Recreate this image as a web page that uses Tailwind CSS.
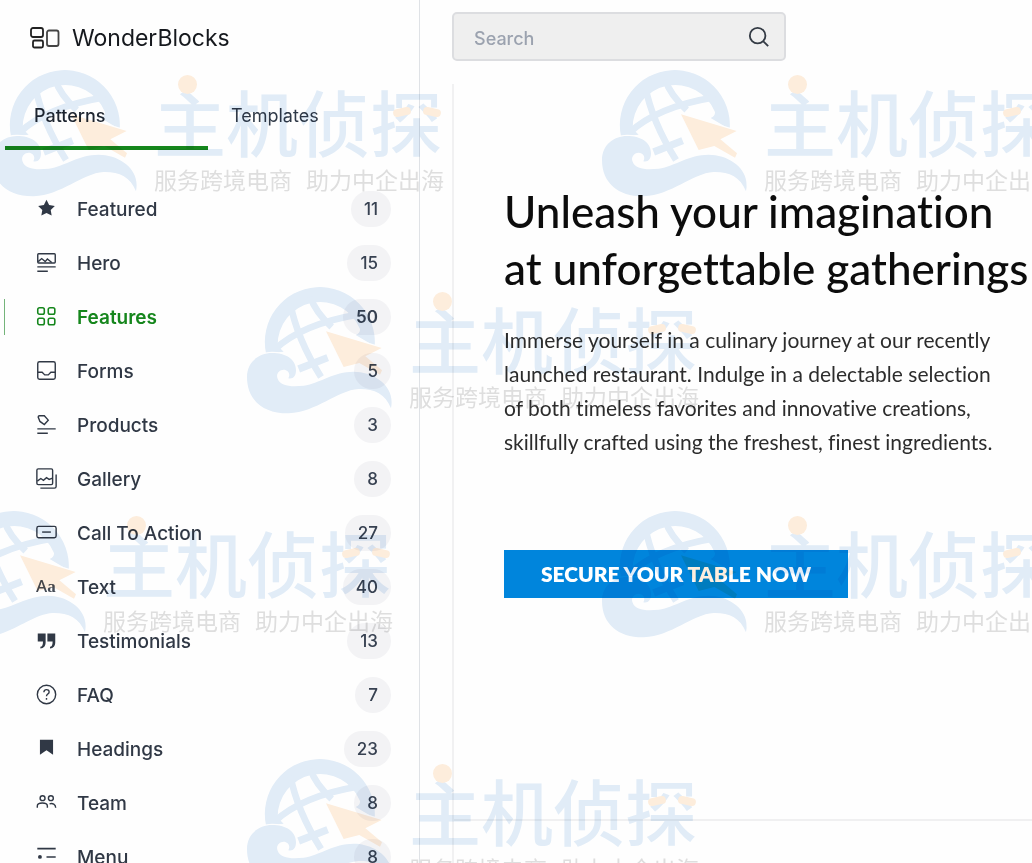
<!DOCTYPE html>
<html lang="en">
  <head>
    <meta charset="UTF-8" />
    <meta name="viewport" content="width=device-width, initial-scale=1.0" />
    <title>WonderBlocks</title>
    <script src="https://cdn.jsdelivr.net/npm/@tailwindcss/browser@4"></script>
  </head>
  <body class="relative h-screen overflow-hidden bg-[#fefefe] font-['Inter','Noto_Sans_CJK_SC',sans-serif] text-[#1e2530]">
    <div class="flex h-full">
      <!-- Sidebar -->
      <aside class="w-[420px] shrink-0 border-r border-[#dfe2e6]">
        <header class="flex h-[76px] items-center gap-3 pl-[30px]">
          <svg class="h-6 w-[30px]" viewBox="0 0 30 24" fill="none" stroke="#222" stroke-width="1.8">
            <rect x="1" y="2" width="12" height="9" rx="2" />
            <rect x="3" y="14.500" width="10" height="7" rx="1.500" />
            <rect x="17" y="4.500" width="11.500" height="15.500" rx="2" stroke="#444" />
          </svg>
          <h1 class="text-[23px] text-[#15181d]">WonderBlocks</h1>
        </header>

        <div class="mt-1 flex h-[70px] px-[5px] text-lg" role="tablist">
          <button role="tab" aria-selected="true" class="w-[203px] border-b-4 border-[#15861c] pt-1.5 pl-[29px] text-left font-medium">Patterns</button>
          <button role="tab" aria-selected="false" class="border-b-4 border-transparent pt-1.5 pl-[23px] text-left text-[#2f3947]">Templates</button>
        </div>

        <nav id="categories" class="mt-8"></nav>
      </aside>

      <!-- Preview -->
      <main class="flex min-w-0 flex-1 flex-col pl-8">
        <div class="mt-3 flex h-[49px] w-[334px] items-center rounded-[5px] border-2 border-[#dcdde0] bg-[#efefef] pr-[14px] pl-5">
          <input type="text" aria-label="Search" placeholder="Search" class="h-full min-w-0 flex-1 bg-transparent pt-1 text-lg font-medium outline-none placeholder:text-[#9ba2af]" />
          <button aria-label="Run search">
            <svg class="size-[22px]" viewBox="0 0 24 24" fill="none" stroke="#343b45" stroke-width="2">
              <circle cx="10.500" cy="10.500" r="8.500" />
              <path d="M16.500 16.500l5.500 5.500" />
            </svg>
          </button>
        </div>

        <div class="mt-[23px] flex-1 border-l-2 border-[#f1f1f2]">
          <section class="h-[737px] border-b-2 border-[#f0f0f1] pt-[99px] pl-[50px] font-['Lato','Noto_Sans_CJK_SC',sans-serif] [font-variant-ligatures:none]">
            <h2 class="text-[44px] leading-[57px] font-medium whitespace-nowrap text-[#0c0c0c]">
              Unleash your imagination<br />at unforgettable gatherings
            </h2>
            <p class="mt-[26px] text-[21px] leading-[34px] whitespace-nowrap text-[#2c2c2c]">
              Immerse yourself in a culinary journey at our recently<br />
              launched restaurant. Indulge in a delectable selection<br />
              of both timeless favorites and innovative creations,<br />
              skillfully crafted using the freshest, finest ingredients.
            </p>
            <button class="mt-[91px] h-12 w-[344px] bg-[#0085dc] text-[21px] font-extrabold text-white">SECURE YOUR TABLE NOW</button>
          </section>
        </div>
      </main>
    </div>

    <div id="watermarks" class="pointer-events-none absolute inset-0 overflow-hidden mix-blend-multiply"></div>

    <script>
      const line = 'fill="none" stroke="currentColor" stroke-width="1.6"';
      const icons = {
        star: '<path fill="currentColor" d="M12 2l3 6 6.500 1-4.700 4.600 1.100 6.400L12 17l-5.900 3 1.100-6.400L2.500 9 9 8z"/>',
        hero: `<g ${line}><rect x="2" y="2" width="20" height="10.500" rx="1"/><path d="M2.500 11l4-3.500 4 3.500 2.500-3 5 4M1.500 17h21M1.500 22h12"/></g>`,
        grid: `<g fill="none" stroke="currentColor" stroke-width="1.800"><rect x="2" y="2" width="7.500" height="7.500" rx="2"/><rect x="14" y="2" width="7.500" height="7.500" rx="2"/><rect x="2" y="14" width="7.500" height="7.500" rx="2"/><rect x="14" y="14" width="7.500" height="7.500" rx="2"/></g>`,
        inbox: `<g ${line}><rect x="2" y="2" width="20" height="20" rx="2"/><path d="M2 14h5l3 3h4l3-3h5"/></g>`,
        tag: `<g ${line}><path d="M2.500 3.500c0-1 .5-1.500 1.500-1.500h5.500l4.500 5-4.500 5-5-3.500zM1.500 17h21M1.500 22h12"/></g>`,
        gallery: `<g ${line}><rect x="1" y="1" width="18" height="18" rx="1.500"/><path d="M1.500 15l4-3 3 2 3.500-3 3 2 4-1.500M23 7.500V21a2 2 0 0 1-2 2H5"/></g>`,
        action: `<g ${line}><rect x="1" y="5" width="22" height="13" rx="2"/><path d="M7 11.500h10"/></g>`,
        quote: '<path fill="currentColor" d="M2 4h9v10c0 4-2 7-6 7v-2c2 0 3-2 3-6H2zM13 4h9v10c0 4-2 7-6 7v-2c2 0 3-2 3-6h-6z"/>',
        help: `<g ${line}><circle cx="12" cy="12" r="10.500"/><path d="M9 9.500c0-4 6-4 6-.5 0 2.500-3 2.500-3 5M12 16v2"/></g>`,
        bookmark: '<path fill="currentColor" d="M4.500 2h15v17L12 14l-7.500 5z"/>',
        team: `<g ${line}><circle cx="7.500" cy="7" r="2.800"/><circle cx="17" cy="7" r="2.800"/><path d="M1.500 18v-2c0-4.500 11.500-4.500 11.500 0v2M15.500 13.500c3.500-1 7 .5 7 4.500"/></g>`,
        menu: `<g fill="none" stroke="currentColor" stroke-width="1.800"><path d="M1.500 3h21M12 12.500h10.500M1.500 22h21"/></g><circle cx="4.500" cy="12.500" r="2.200" fill="currentColor"/>`,
      };

      const categories = [
        ["Featured", 11, "star"],
        ["Hero", 15, "hero"],
        ["Features", 50, "grid"],
        ["Forms", 5, "inbox"],
        ["Products", 3, "tag"],
        ["Gallery", 8, "gallery"],
        ["Call To Action", 27, "action"],
        ["Text", 40, null],
        ["Testimonials", 13, "quote"],
        ["FAQ", 7, "help"],
        ["Headings", 23, "bookmark"],
        ["Team", 8, "team"],
        ["Menu", 8, "menu"],
      ];

      document.getElementById("categories").innerHTML = categories
        .map(([name, count, icon]) => {
          const active = name === "Features";
          const glyph = icon
            ? `<svg class="size-[21px]" viewBox="0 0 24 24">${icons[icon]}</svg>`
            : `<span aria-hidden="true" class="font-['Noto_Sans',sans-serif] text-[17px] leading-5 text-[#454b55]">A<span class="font-['Liberation_Serif',serif] font-bold">a</span></span>`;
          return `
            <a href="#" class="relative flex h-[54px] items-center pr-7 pl-9 text-[19px] ${active ? "font-semibold text-[#15861c]" : "font-medium text-[#303845]"}">
              ${active ? '<span class="absolute left-1 h-9 w-px bg-[#74b47a]"></span>' : ""}
              <span class="flex w-[41px] items-center pb-0.5">${glyph}</span>
              <span class="flex-1 pt-0.5">${name}</span>
              <span class="flex h-9 items-center rounded-full bg-[#f3f3f5] px-[13px] pt-0.5 text-[17px] text-[#374151] ${active ? "font-semibold" : "font-medium"}">${count}</span>
            </a>`;
        })
        .join("");

      // Left and top of each watermark stamp
      const stamps = [[-8, 70], [602, 70], [247, 287], [-59, 511], [602, 511], [247, 759]];

      document.getElementById("watermarks").innerHTML = stamps
        .map(([x, y]) => `
          <div class="absolute flex gap-[17px]" style="left: ${x}px; top: ${y}px">
            <svg class="h-[127px] w-[145px] shrink-0" viewBox="0 0 435 381">
              <path fill="#e2edf8" d="M57 199A165 165 0 1 1 383 178L326 144Q340 138 339 126A128 128 0 0 0 92 176L110 194z"/>
              <g fill="none" stroke="#e2edf8" stroke-width="20">
                <path d="M130 50Q150 155 222 270M190 30Q205 75 254 120M80 190Q165 110 340 82"/>
                <path d="M155 246L242 212" stroke-width="22"/>
              </g>
              <path fill="#feeedd" stroke="#fff" stroke-width="8" paint-order="stroke" d="M237 133L404 183L355 208L405 250L399 263L337 228L290 240z"/>
              <path fill="#e2edf8" stroke="#fff" stroke-width="8" paint-order="stroke" d="M0 270C0 225 35 198 75 198C115 198 147 215 147 250C147 268 138 277 124 274C132 260 122 248 110 248C96 248 86 262 92 275C100 297 130 300 170 296C220 288 260 254 320 254C375 254 428 288 433 335Q435 350 432 364C415 320 380 305 335 306C270 310 210 375 125 379C50 380 0 340 0 270z"/>
            </svg>
            <div class="relative pt-2 font-['Noto_Sans_CJK_SC',sans-serif] whitespace-nowrap" lang="zh-CN">
              <p class="text-7xl leading-[84px] font-medium text-[#e2edf8]">主机侦探</p>
              <p class="flex gap-[14px] text-[23px] leading-[34px] text-[#dfdfdf]"><span>服务跨境电商</span><span>助力中企出海</span></p>
              <span class="absolute top-[5px] left-6 size-[19px] rounded-full bg-[#feeedd]"></span>
              <span class="absolute top-[38px] left-[239px] h-2 w-[18px] -rotate-12 rounded-full bg-[#feeedd]"></span>
              <span class="absolute top-[38px] left-[269px] h-2 w-[18px] rotate-12 rounded-full bg-[#feeedd]"></span>
            </div>
          </div>`)
        .join("");
    </script>
  </body>
</html>
